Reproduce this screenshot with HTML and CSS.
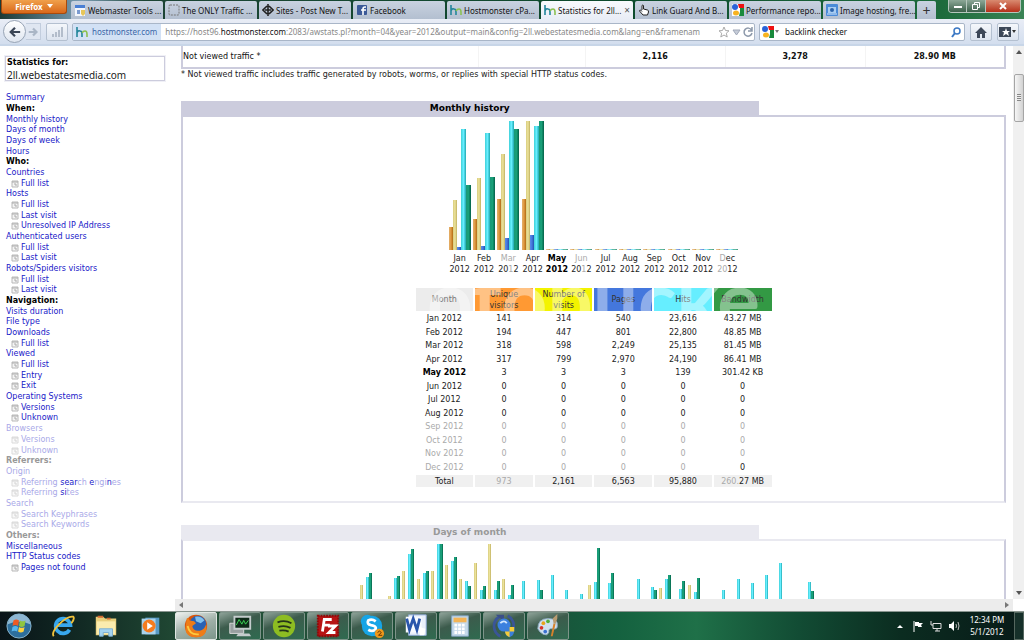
FILE: index.html
```html
<!DOCTYPE html>
<html lang="en">
<head>
    <meta charset="UTF-8">
    <meta name="viewport" content="width=device-width, initial-scale=1.0">
    <title>Statistics for 2ll.webestatesmedia.com</title>
    <link rel="stylesheet" href="styles.css">
</head>
<body>
    <svg width="0" height="0" class="defs">
        <symbol id="hm" viewBox="0 0 12 12"><path d="M1 1v10M1 7q1-3 3-2q2 0 2 3v3" fill="none" stroke="#23869b" stroke-width="1.6"/><path d="M6 7q1-2 3-2q2 0 2 3v3" fill="none" stroke="#8cc152" stroke-width="1.6"/></symbol>
        <symbol id="google" viewBox="0 0 12 12"><path d="M0 0h12v12H0z" fill="#fff"/><path d="M6 0h6v4H7z" fill="#e11"/><path d="M8 4h4v8H7l1-4z" fill="#198a3c"/><circle cx="3" cy="3" r="3" fill="#2a62d8"/><ellipse cx="4" cy="9" rx="3" ry="2.5" fill="#f8b320"/></symbol>
        <symbol id="page" viewBox="0 0 8 8"><path d="M1 1h6v6H1z" fill="#f4f4f4" stroke="#b8b8b8"/><path d="M1 2h6M3 4h2v2" fill="none" stroke="#aaa"/></symbol>
    </svg>

    <header class="titlebar">
        <button class="firefox">Firefox <svg viewBox="0 0 6 4"><path d="M0 0h6L3 4z" fill="#fff"/></svg></button>
        <nav class="tabs">
            <button class="tab"><svg viewBox="0 0 12 12"><path d="M1 3h10v9H1z" fill="#f4f7fc"/><path d="M1 1h10v3H1z" fill="#4a7fd4"/><path d="M3 6h3v4H3z" fill="#7a9ad0"/><path d="M7 6h4v4l-2 2-2-2z" fill="#e7c65a"/></svg><span>Webmaster Tools ...</span></button>
            <button class="tab"><svg viewBox="0 0 12 12"><rect x="1" y="1" width="10" height="10" rx="1" fill="none" stroke="#777" stroke-dasharray="2 1"/></svg><span>The ONLY Traffic ...</span></button>
            <button class="tab"><svg viewBox="0 0 12 12"><path d="M5 2L1 6l4 4M7 2l4 4-4 4M6 0v12M3 6h6" fill="none" stroke="#222" stroke-width="1.6"/></svg><span>Sites - Post New T...</span></button>
            <button class="tab"><svg viewBox="0 0 12 12"><rect x="1" y="1" width="10" height="10" rx="1" fill="#3b5998"/><path d="M10 3H9Q7 3 7 5v6M5 6h5" fill="none" stroke="#fff" stroke-width="1.6"/></svg><span>Facebook</span></button>
            <button class="tab"><svg><use href="#hm"/></svg><span>Hostmonster cPa...</span></button>
            <button class="tab active"><svg><use href="#hm"/></svg><span>Statistics for 2ll...</span><i class="close">×</i></button>
            <button class="tab"><svg viewBox="0 0 12 12"><path d="M4 6V1.500q1-1 1.500 0V5l4 1q1 0 1 2l-1 3H5L1.500 7q0-1 1-1L4 7.500" fill="#fff" stroke="#222"/></svg><span>Link Guard And B...</span></button>
            <button class="tab"><svg><use href="#google"/></svg><span>Performance repo...</span></button>
            <button class="tab"><svg viewBox="0 0 12 12"><rect width="12" height="12" rx="1" fill="#4b8bd8"/><path d="M2 3h8v6H2z" fill="#a9cdf2"/><circle cx="6" cy="6" r="2" fill="#2c64ad"/><path d="M1 10h10" stroke="#d6e8fb"/></svg><span>Image hosting, fre...</span></button>
            <button class="tab new">+</button>
        </nav>
        <div class="window-buttons">
            <button aria-label="Minimize"><svg viewBox="0 0 12 10"><path d="M2 5h8v2H2z" fill="#fff"/></svg></button>
            <button aria-label="Restore"><svg viewBox="0 0 12 10"><path d="M4.500 3V1.500h5v5H8M2.500 3.500h5v5h-5z" fill="none" stroke="#fff"/></svg></button>
            <button class="quit" aria-label="Close"><svg viewBox="0 0 12 10"><path d="M3 2l6 6M9 2L3 8" stroke="#fff" stroke-width="2"/></svg></button>
        </div>
    </header>

    <div class="toolbar">
        <button class="back" aria-label="Back"><svg viewBox="0 0 14 14"><path d="M7 2L2 7l5 5M2 7h11" fill="none" stroke="#3b4656" stroke-width="2.600"/></svg></button>
        <button class="forward" aria-label="Forward"><svg viewBox="0 0 14 14"><path d="M7 3l4 4-4 4M11 7H2" fill="none" stroke="#aab6c6" stroke-width="2.600"/></svg></button>
        <button class="square" aria-label="Rank"><svg viewBox="0 0 12 12"><path d="M1 8h2v3H1zM4 6h2v5H4zM7 4h2v7H7zM10 1h2v10h-2z" fill="#b3bdcb"/></svg></button>
        <div class="urlbar">
            <span class="identity"><svg><use href="#hm"/></svg>hostmonster.com</span>
            <span class="url">https://host96.<b>hostmonster.com</b>:2083/awstats.pl?month=04&amp;year=2012&amp;output=main&amp;config=2ll.webestatesmedia.com&amp;lang=en&amp;framenam</span>
            <svg viewBox="0 0 12 12"><path d="M6 1l1.500 3.500 3.500.3-2.700 2.400.9 3.800L6 9l-3.200 2 .9-3.800L1 4.800l3.500-.3z" fill="#fff" stroke="#aaa"/></svg>
            <svg viewBox="0 0 12 12"><path d="M3 4h7L6.500 9z" fill="#c6ccd8" stroke="#a0a8b8"/></svg>
            <svg viewBox="0 0 12 12"><path d="M9.500 4A4 4 0 1 0 10 7M10 1v4H6" fill="none" stroke="#8d99ab" stroke-width="1.500"/></svg>
        </div>
        <div class="search">
            <svg><use href="#google"/></svg>
            <svg class="caret" viewBox="0 0 6 4"><path d="M1 0h4L3 3z" fill="#777"/></svg>
            <input type="text" value="backlink checker" aria-label="Search">
            <svg viewBox="0 0 12 12"><circle cx="7" cy="5" r="3" fill="none" stroke="#3b78c4" stroke-width="1.500"/><path d="M5 7l-3 4" stroke="#3b78c4" stroke-width="2"/></svg>
        </div>
        <button class="square" aria-label="Home"><svg viewBox="0 0 12 12"><path d="M6 1l6 6h-2v5H7V8H5v4H2V7H0z" fill="#3d4858"/></svg></button>
        <button class="square" aria-label="Bookmarks"><svg viewBox="0 0 12 12"><path d="M0 1h12v10H0z" fill="#3d4858"/><path d="M7 2l1 3h3L9 6.500 10 10 7 8l-3 2 1-3.500L3 5h3z" fill="#fff"/></svg><svg class="caret" viewBox="0 0 6 4"><path d="M1 0h4L3 3z" fill="#333"/></svg></button>
    </div>

    <div class="content">
        <aside class="sidebar">
            <div class="site"><b>Statistics for:</b><span>2ll.webestatesmedia.com</span></div>
            <ul class="menu">
                <li><a href="#">Summary</a></li>
                <li><b>When:</b></li>
                <li><a href="#">Monthly history</a></li>
                <li><a href="#">Days of month</a></li>
                <li><a href="#">Days of week</a></li>
                <li><a href="#">Hours</a></li>
                <li><b>Who:</b></li>
                <li><a href="#">Countries</a></li>
                <li class="sub"><svg><use href="#page"/></svg><a href="#">Full list</a></li>
                <li><a href="#">Hosts</a></li>
                <li class="sub"><svg><use href="#page"/></svg><a href="#">Full list</a></li>
                <li class="sub"><svg><use href="#page"/></svg><a href="#">Last visit</a></li>
                <li class="sub"><svg><use href="#page"/></svg><a href="#">Unresolved IP Address</a></li>
                <li><a href="#">Authenticated users</a></li>
                <li class="sub"><svg><use href="#page"/></svg><a href="#">Full list</a></li>
                <li class="sub"><svg><use href="#page"/></svg><a href="#">Last visit</a></li>
                <li><a href="#">Robots/Spiders visitors</a></li>
                <li class="sub"><svg><use href="#page"/></svg><a href="#">Full list</a></li>
                <li class="sub"><svg><use href="#page"/></svg><a href="#">Last visit</a></li>
                <li><b>Navigation:</b></li>
                <li><a href="#">Visits duration</a></li>
                <li><a href="#">File type</a></li>
                <li><a href="#">Downloads</a></li>
                <li class="sub"><svg><use href="#page"/></svg><a href="#">Full list</a></li>
                <li><a href="#">Viewed</a></li>
                <li class="sub"><svg><use href="#page"/></svg><a href="#">Full list</a></li>
                <li class="sub"><svg><use href="#page"/></svg><a href="#">Entry</a></li>
                <li class="sub"><svg><use href="#page"/></svg><a href="#">Exit</a></li>
                <li><a href="#">Operating Systems</a></li>
                <li class="sub"><svg><use href="#page"/></svg><a href="#">Versions</a></li>
                <li class="sub"><svg><use href="#page"/></svg><a href="#">Unknown</a></li>
                <li class="faint"><a href="#">Browsers</a></li>
                <li class="sub faint"><svg><use href="#page"/></svg><a href="#">Versions</a></li>
                <li class="sub faint"><svg><use href="#page"/></svg><a href="#">Unknown</a></li>
                <li class="faint"><b>Referrers:</b></li>
                <li class="faint"><a href="#">Origin</a></li>
                <li class="sub faint"><svg><use href="#page"/></svg><a href="#">Referring <em>sear</em>ch <em>e</em>ngi<em>n</em>es</a></li>
                <li class="sub faint"><svg><use href="#page"/></svg><a href="#">Referring <em>si</em>tes</a></li>
                <li class="faint"><a href="#">Search</a></li>
                <li class="sub faint"><svg><use href="#page"/></svg><a href="#">Search Keyphrases</a></li>
                <li class="sub faint"><svg><use href="#page"/></svg><a href="#">Search Keywords</a></li>
                <li class="faint"><b>Others:</b></li>
                <li><a href="#">Miscellaneous</a></li>
                <li><a href="#">HTTP Status codes</a></li>
                <li class="sub"><svg><use href="#page"/></svg><a href="#">Pages not found</a></li>
            </ul>
        </aside>

        <div class="frame">
            <main class="stats">
                <table class="traffic">
                    <tr><td class="name">Not viewed traffic *</td><td></td><td>2,116</td><td>3,278</td><td>28.90 MB</td></tr>
                </table>
                <p class="note">* Not viewed traffic includes traffic generated by robots, worms, or replies with special HTTP status codes.</p>

                <section>
                    <h2>Monthly history</h2>
                    <div class="box history">
                        <div class="months" id="months"></div>
                        <div class="table-wrap">
                            <table class="monthly">
                                <thead>
                                    <tr><th>Month</th><th class="unique">Unique visitors</th><th class="visits">Number of visits</th><th class="pages">Pages</th><th class="hits">Hits</th><th class="bandwidth">Bandwidth</th></tr>
                                </thead>
                                <tbody id="rows"></tbody>
                                <tfoot>
                                    <tr><td>Total</td><td class="soft">973</td><td>2,161</td><td>6,563</td><td>95,880</td><td><i>260.</i>27 MB</td></tr>
                                </tfoot>
                            </table>
                        </div>
                    </div>
                </section>

                <section class="days-section">
                    <h2 class="pale">Days of month</h2>
                    <div class="box pale">
                        <div class="days" id="days"></div>
                    </div>
                </section>
            </main>
            <div class="vscroll"><svg viewBox="0 0 6 4"><path d="M0 4h6L3 0z" fill="#555"/></svg><span class="thumb"></span><svg class="down" viewBox="0 0 6 4"><path d="M0 0h6L3 4z" fill="#555"/></svg></div>
            <div class="hscroll"><svg viewBox="0 0 4 6"><path d="M4 0v6L0 3z" fill="#777"/></svg><svg viewBox="0 0 4 6"><path d="M0 0v6l4-3z" fill="#777"/></svg></div>
        </div>
    </div>

    <footer class="taskbar">
        <div class="pinned">
            <button aria-label="Start"><svg viewBox="0 0 28 28"><circle cx="14" cy="14" r="13" fill="#2d6e9c" stroke="#8fb9d0"/><path d="M2 12a12 11 0 0 1 24 0q-12-5-24 0z" fill="#8db7d2"/><path d="M8 8q3-2 6 0l-1 6q-3-2-6 0z" fill="#ef5a24"/><path d="M15 8q3 2 6 0l-1 6q-3 2-6 0z" fill="#8fc63e"/><path d="M7 15q3-2 6 0l-1 5q-3-2-6 0z" fill="#55b4ee"/><path d="M14 15q3 2 6 0l-1 5q-3 2-6 0z" fill="#fdd13c"/></svg></button>
            <button aria-label="Internet Explorer"><svg viewBox="0 0 28 28"><path d="M21 18a8 8 0 1 1 1-5H8" fill="none" stroke="#38a8ee" stroke-width="4"/><path d="M4 25Q1 21 10 12T25 4q2 2-2 7" fill="none" stroke="#f0c23b" stroke-width="2"/></svg></button>
            <button aria-label="Explorer"><svg viewBox="0 0 28 28"><path d="M3 4h8l2 2h12v18H3z" fill="#e8cf7c"/><path d="M5 4h6M15 6h4" stroke="#d36b33" stroke-width="2"/><path d="M4 9h20v14H4z" fill="#faecae"/><path d="M7 25v-8h14v8h-4v-4h-6v4z" fill="#a4d4f0" stroke="#79aed0"/></svg></button>
            <button aria-label="Media Player"><svg viewBox="0 0 28 28"><path d="M9 5h15v18H9z" fill="#579ac5"/><path d="M5 6h15v17H5z" fill="#a9d2ec"/><circle cx="13" cy="14" r="7" fill="#f57c20"/><path d="M11 10l6 4-6 4z" fill="#fff"/></svg></button>
        </div>
        <div class="running">
            <button class="current" aria-label="Firefox"><svg viewBox="0 0 28 28"><circle cx="14" cy="14" r="12" fill="#d9560c"/><circle cx="16" cy="12" r="9" fill="#2a62b4"/><path d="M13 4q7-1 10 4l-4 3-5-2z" fill="#7fc0ee"/><path d="M4 6q2-2 3 2l5 1 2 2-4 3q1 6 8 5 5-1 7-7 2 14-11 14T3 14z" fill="#ee7c18"/><path d="M5 14q2 10 12 9" fill="none" stroke="#fcc940" stroke-width="2"/></svg></button>
            <button aria-label="Monitor"><svg viewBox="0 0 28 28"><path d="M3 11h15v11H3z" fill="#98a0a0" stroke="#ddd"/><path d="M8 4h17v13H8z" fill="#0e2a18" stroke="#c4cccc" stroke-width="2"/><path d="M10 13l3-6 3 5 2-4 2 4 3-4" fill="none" stroke="#3cdd58"/><path d="M12 22h12l2 3H10z" fill="#c4cccc"/></svg></button>
            <button aria-label="Spotify"><svg viewBox="0 0 28 28"><circle cx="14" cy="14" r="12" fill="#8dbd22"/><path d="M7 10q8-3 15 1M8 15q7-2 13 1M9 19q6-1 10 1" fill="none" stroke="#25351a" stroke-width="2"/></svg></button>
            <button aria-label="FileZilla"><svg viewBox="0 0 28 28"><path d="M3 3h22v22H3z" fill="#b71313" stroke="#8c0c0c" stroke-width="2" stroke-dasharray="2 1"/><path d="M8 20L10 7h8M9 13h7M14 14h8l-7 7h7" fill="none" stroke="#fff" stroke-width="3"/></svg></button>
            <button aria-label="Skype"><svg viewBox="0 0 28 28"><circle cx="9" cy="9" r="7" fill="#17a5e6"/><circle cx="18" cy="18" r="7" fill="#17a5e6"/><circle cx="14" cy="14" r="11" fill="#17a5e6"/><path d="M18 9q-4-3-8-1-2 4 3 5 6 1 5 4-3 4-8 1" fill="none" stroke="#fff" stroke-width="3"/><circle cx="22" cy="22" r="5" fill="#f0981a"/><path d="M20 21q2-3 4 0l-3 3h4" fill="none" stroke="#5c3000"/></svg></button>
            <button aria-label="Word"><svg viewBox="0 0 28 28"><path d="M6 2h19v22H6z" fill="#e9f0fb" stroke="#8fabd8"/><path d="M3 4h17v17H3z" fill="#f8fbff"/><path d="M4 6l3 12 4-12 4 12 3-12" fill="none" stroke="#2a56ac" stroke-width="3"/><path d="M18 15l6 2-1 7h-5z" fill="#fff"/></svg></button>
            <button aria-label="Calculator"><svg viewBox="0 0 28 28"><path d="M5 3h18v22H5z" fill="#c5d9ea" stroke="#7fa2bf"/><path d="M7 5h14v5H7z" fill="#f3b456"/><path d="M8 13h12M8 17h12M8 21h12" stroke="#fff" stroke-width="3" stroke-dasharray="3 1"/></svg></button>
            <button aria-label="Updater"><svg viewBox="0 0 28 28"><path d="M10 25A12 12 0 0 1 9 4M18 3a12 12 0 0 1 6 14" fill="none" stroke="#3a5598" stroke-width="3"/><path d="M5 2h9v7z" fill="#3a4f88"/><circle cx="14" cy="13" r="7" fill="#3b80df"/><path d="M10 11q4-4 7 0" stroke="#cfe6ff" fill="none" stroke-width="2"/><path d="M15 15h10v5q-1 5-5 6-4-1-5-6z" fill="#3b7fd9"/><path d="M20 15h5v5h-10q1 5 5 6z" fill="#f6cc36"/></svg></button>
            <button aria-label="Paint"><svg viewBox="0 0 28 28"><path d="M3 17Q3 6 14 6t10 8q0 4-5 3t-4 4q-2 4-6 2t-6-6z" fill="#cfe0ee" stroke="#8eabc3"/><circle cx="7" cy="16" r="2" fill="#d8342b"/><circle cx="9" cy="11" r="2" fill="#e8a31b"/><circle cx="14" cy="9" r="2" fill="#4fae3a"/><circle cx="11" cy="20" r="2" fill="#3a70d0"/><path d="M17 25l3-14 2 1-3 13z" fill="#d7822b"/><path d="M20 11l-1-5 5-5v5l-2 6z" fill="#b79b72"/></svg></button>
        </div>
        <div class="tray">
            <svg viewBox="0 0 12 12"><path d="M3 8h6L6 5z" fill="#fff"/></svg>
            <svg viewBox="0 0 12 12"><path d="M2 1v11" stroke="#fff"/><path d="M3 2h4v1h4L9 5l1 2H6V6H3z" fill="#fff"/></svg>
            <svg viewBox="0 0 12 12"><path d="M3 3.500h8v5H3zM5 11h5M7 8v3M1 1v4h2" fill="none" stroke="#ddd"/></svg>
            <svg viewBox="0 0 12 12"><path d="M1 4h2l3-3v10L3 8H1z" fill="#fff"/><path d="M8 4q1 2 0 4M10 2q2 4 0 8" fill="none" stroke="#bbb"/></svg>
            <div class="clock"><span>12:34 PM</span><span>5/1/2012</span></div>
            <button class="desktop" aria-label="Show desktop"></button>
        </div>
    </footer>

    <script>
        // unique visitors, visits, pages, hits, bandwidth
        const months = [
            ['Jan', [23, 50, 3, 121, 65], ['141', '314', '540', '23,616', '43.27 MB']],
            ['Feb', [31, 72, 4, 117, 73], ['194', '447', '801', '22,800', '48.85 MB']],
            ['Mar', [51, 96, 12, 129, 121], ['318', '598', '2,249', '25,135', '81.45 MB']],
            ['Apr', [51, 129, 15, 124, 129], ['317', '799', '2,970', '24,190', '86.41 MB']],
            ['May', [1, 1, 1, 1, 1], ['3', '3', '3', '139', '301.42 KB']],
            ['Jun'], ['Jul'], ['Aug'], ['Sep'], ['Oct'], ['Nov'], ['Dec']
        ];
        const kinds = ['u', 'v', 'p', 'h', 'k'];
        const softLabels = {
            Mar: ['<i>Mar</i>', '20<i>1</i>2'],
            Jun: ['<i>Jun</i>', '20<i>1</i>2'],
            Dec: ['<i>D</i>ec', '<i>20</i>12']
        };

        function bar(kind, height) {
            return `<span class="bar ${kind}" style="height:${height}px"></span>`;
        }

        months.forEach(([name, heights = [1, 1, 1, 1, 1], values = ['0', '0', '0', '0', '0']], i) => {
            const label = softLabels[name] || [name, '2012'];
            const now = name === 'May' ? 'now' : '';
            document.getElementById('months').innerHTML +=
                `<div class="month ${now} ${i > 3 ? 'empty' : ''}"><div class="bars">${heights.map((h, n) => bar(kinds[n], h)).join('')}</div><span>${label[0]}</span><span>${label[1]}</span></div>`;
            document.getElementById('rows').innerHTML +=
                `<tr class="${now} ${i > 7 ? 'soft' : ''}"><td>${name} 2012</td>${values.map(v => `<td>${v}</td>`).join('')}</tr>`;
        });

        // visits, hits, bandwidth for each day, then the average
        const days = [
            [16, 24, 28], [0, 2, 0], [5, 23, 25], [30, 47, 52], [22, 28, 30], [30, 57, 57], [36, 40, 44], [22, 20, 15],
            [38, 11, 15], [57, 11, 20], [22, 6, 16], [0, 20, 2], [0, 21, 11], [0, 26, 0], [0, 11, 0], [0, 7, 0],
            [16, 19, 53], [2, 18, 28], [0, 0, 0], [0, 22, 0], [0, 14, 11], [13, 22, 26], [0, 12, 20], [16, 9, 23],
            [0, 1, 0], [2, 11, 0], [0, 22, 0], [0, 18, 0], [0, 26, 0], [0, 38, 0], [0, 0, 0], [1, 19, 10], [0, 0, 0]
        ];
        days.forEach(([v, h, k]) => {
            document.getElementById('days').innerHTML += `<div class="bars">${bar('v', v)}${bar('p', 0)}${bar('h', h)}${bar('k', k)}</div>`;
        });
    </script>
</body>
</html>
```
FILE: styles.css
```css
* {
    margin: 0;
    padding: 0;
    box-sizing: border-box;
}
body {
    display: flex;
    flex-direction: column;
    height: 100vh;
    overflow: hidden;
    background: #fff;
    font-family: "DejaVu Sans", sans-serif;
    font-size: 8px;
    color: #222;
}
button {
    border: none;
    background: none;
    font: inherit;
    color: inherit;
}
svg {
    width: 12px;
    height: 12px;
    flex: none;
}
.defs {
    position: absolute;
    width: 0;
    height: 0;
}

/* browser window */
.titlebar, .toolbar {
    font-family: "Noto Sans", sans-serif;
    font-size: 8px;
    display: flex;
}
.titlebar {
    height: 19px;
    background: linear-gradient(90deg, #1b3a35, #7b9db4 8%, #1d4434 14%, #0c4a2c 60%, #1d6b3c 92%, #3a8455);
}
.firefox {
    width: 66px;
    height: 14px;
    margin: 0 4px 0 1px;
    background: linear-gradient(#f0a04b, #d9681a);
    border: 1px solid #a84a0c;
    border-top: none;
    border-radius: 0 0 3px 3px;
    color: #fff;
    font-weight: bold;
    line-height: 12px;
}
.firefox svg {
    width: 6px;
    height: 4px;
    margin: 0 0 2px 2px;
}
.tabs {
    display: flex;
    flex: 1;
    gap: 2px;
    padding-top: 1px;
}
.tab {
    display: flex;
    align-items: center;
    gap: 2px;
    flex: 0 1 92px;
    min-width: 0;
    padding: 0 3px;
    background: linear-gradient(#c9d2e0, #b3bfd0);
    border-radius: 2px 2px 0 0;
    color: #111;
    white-space: nowrap;
}
.tab.active {
    background: linear-gradient(#f8fafd, #e9edf6);
}
.tab .close {
    font-style: normal;
    font-size: 10px;
    margin-left: auto;
    color: #555;
}
.tab.new {
    flex: 0 0 19px;
    justify-content: center;
    font-size: 14px;
    color: #333;
}
.window-buttons {
    display: flex;
    width: 73px;
    height: 13px;
    margin-right: 3px;
    border: 1px solid #b5c6bc;
    border-top: none;
    border-radius: 0 0 4px 4px;
    overflow: hidden;
}
.window-buttons button {
    flex: 1;
    background: linear-gradient(#8ca797, #3b604a);
    border-right: 1px solid #b5c6bc;
    line-height: 0;
}
.window-buttons .quit {
    flex: 2;
    border: none;
    background: linear-gradient(#d98a70, #b5301a);
}
.toolbar {
    align-items: center;
    height: 27px;
    padding: 0 5px 0 3px;
    background: linear-gradient(#e9edf6, #d3deee);
    border-bottom: 2px solid #c8d6e8;
}
.back {
    width: 23px;
    height: 23px;
    border: 1px solid #98a4b5;
    border-radius: 50%;
    background: linear-gradient(#fff, #dfe6f0);
    line-height: 0;
}
.forward {
    width: 15px;
    height: 17px;
    line-height: 0;
    background: #dfe6f1;
    border: 1px solid #c2cddd;
    border-left: none;
}
.square {
    display: flex;
    align-items: center;
    justify-content: center;
    width: 22px;
    height: 18px;
    margin-left: 5px;
    border: 1px solid #b4c0d0;
    border-radius: 2px;
    background: linear-gradient(#f4f7fb, #dce4ef);
}
.urlbar, .search {
    display: flex;
    align-items: center;
    height: 18px;
    margin-left: 4px;
    border: 1px solid #a9b6c8;
    border-radius: 2px;
    background: #fff;
}
.urlbar {
    flex: 1;
    min-width: 0;
}
.identity {
    display: flex;
    align-items: center;
    gap: 4px;
    height: 16px;
    padding: 0 4px 0 3px;
    background: #d2e1f5;
    color: #3a67a8;
}
.url {
    flex: 1;
    overflow: hidden;
    white-space: nowrap;
    padding-left: 4px;
    color: #888;
}
.url b {
    font-weight: normal;
    color: #111;
}
.search {
    width: 206px;
    padding: 0 2px;
}
.search input {
    flex: 1;
    min-width: 0;
    border: none;
    font: inherit;
    color: #111;
    padding-left: 5px;
}
.caret {
    width: 6px;
    height: 4px;
}

/* left frame */
.content {
    display: flex;
    flex: 1;
    min-height: 0;
}
.sidebar {
    display: flex;
    flex-direction: column;
    width: 175px;
    padding: 10px 10px 38px 5px;
}
.site {
    display: flex;
    flex-direction: column;
    height: 25px;
    margin-bottom: 12px;
    padding-left: 1px;
    border: 1px solid #ccccdd;
    outline: 1px solid #f0f0f6;
    line-height: 12px;
}
.site b {
    color: #000;
}
.site span {
    font-family: "Noto Sans", sans-serif;
    font-size: 10px;
}
.menu {
    display: flex;
    flex-direction: column;
    flex: 1;
    list-style: none;
    padding-left: 1px;
}
.menu li {
    display: flex;
    align-items: center;
    flex: 1;
    min-height: 0;
    white-space: pre;
    line-height: 10px;
}
.menu a {
    color: #2020c8;
    text-decoration: none;
}
.menu b {
    color: #000;
}
.menu .sub {
    padding-left: 5px;
    gap: 2px;
}
.menu svg {
    width: 8px;
    height: 8px;
}
.menu .faint a {
    color: #a9a9e8;
}
.menu .faint b {
    color: #999;
}
.menu .faint svg {
    opacity: 0.5;
}
.menu em {
    font-style: normal;
    color: #2020c8;
}

/* right frame */
.frame {
    display: grid;
    grid-template-columns: 1fr 11px;
    grid-template-rows: minmax(0, 1fr) 12px;
    flex: 1;
    min-width: 0;
}
.stats {
    display: flex;
    flex-direction: column;
    overflow: hidden;
    padding: 0 7px 0 6px;
}
.traffic {
    flex: none;
    width: 100%;
    height: 23px;
    table-layout: fixed;
    border: 2px solid #ccccdd;
    border-top: none;
    border-collapse: collapse;
    font-weight: bold;
    text-align: center;
}
.traffic td {
    width: 17%;
    border-left: 1px solid #f4f4f4;
    color: #111;
}
.traffic td.name {
    width: 36%;
    text-align: left;
    font-weight: normal;
    border-left: 2px solid #ccccdd;
}
.traffic td:nth-child(2) {
    width: 13%;
}
.note {
    line-height: 12px;
    margin-bottom: 20px;
}
h2 {
    width: 70%;
    height: 14px;
    background: #ccccdd;
    font-size: 9px;
    line-height: 15px;
    text-align: center;
    color: #000;
}
h2.pale {
    background: #e9e9f0;
    color: #999;
}
.box {
    border: 2px solid #ccccdd;
}
.box.pale {
    flex: 1;
    border-top-color: #e9e9f0;
    border-bottom: none;
    padding-top: 3px;
}
.history {
    display: flex;
    flex-direction: column;
    align-items: center;
    padding: 4px 0 12px;
    margin-bottom: 22px;
    border-bottom-color: #e9e9f0;
}
.stats section {
    flex: none;
}
.stats .days-section {
    display: flex;
    flex-direction: column;
    flex: 1;
}
.months {
    display: grid;
    grid-template-columns: repeat(12, 1fr);
    width: 292px;
    margin-bottom: 11px;
}
.month {
    display: flex;
    flex-direction: column;
    align-items: center;
    line-height: 11px;
}
.month .bars {
    height: 129px;
    margin-bottom: 3px;
}
.month.now span {
    font-weight: bold;
    color: #000;
}
.month.empty .bar {
    opacity: 0.7;
}
.month i, .monthly i {
    font-style: normal;
    color: #aaa;
}
.bars {
    display: flex;
    align-items: flex-end;
}
.bar {
    width: 4px;
}
.month .h, .month .k {
    width: 5px;
}
.u { background: linear-gradient(90deg, #e3b06c, #e09a40 50%, #b06a14); }
.v { background: linear-gradient(90deg, #d8cd80, #ece29a 50%, #c0b060); }
.p { background: linear-gradient(90deg, #5a8ce8, #4477dd 50%, #2450b0); }
.h { background: linear-gradient(90deg, #40d0d8, #66eeff 50%, #1fa8b0); }
.k { background: linear-gradient(90deg, #1a9878, #18a078 50%, #046048); }
.days {
    display: grid;
    grid-template-columns: repeat(33, 1fr);
    width: 474px;
    height: 57px;
    margin: 0 auto;
    padding-left: 3px;
}
.days .bar {
    width: 3px;
}

.table-wrap {
    position: relative;
}
.monthly {
    width: 360px;
    table-layout: fixed;
    border-spacing: 2px;
    text-align: center;
    line-height: 11px;
}
.monthly th {
    height: 23px;
    font-weight: normal;
    background: #ececec;
    color: #333;
}
.monthly th:first-child {
    color: #777;
}
.monthly .unique { background: #ff9933; }
.monthly .visits { background: #f3f300; }
.monthly .pages { background: #4477dd; }
.monthly .hits { background: #66eeff; }
.monthly .bandwidth { background: #339944; }
.monthly tbody tr {
    height: 11px;
}
.monthly tbody tr:nth-child(even) {
    height: 12px;
}
.monthly .now td:first-child {
    font-weight: bold;
    color: #000;
}
.monthly .soft, .monthly .soft td {
    color: #aaa;
}
.monthly tbody tr:last-child td:last-child {
    color: #222;
}
.monthly tfoot td {
    height: 12px;
    background: #f0f0f0;
}
/* pale lettering across the heading row */
.table-wrap::after {
    content: "otobucke";
    position: absolute;
    inset: 2px 2px auto 2px;
    height: 23px;
    overflow: hidden;
    font-family: Lato, sans-serif;
    font-size: 80px;
    font-weight: bold;
    line-height: 20px;
    text-align: center;
    color: rgba(255, 255, 255, 0.4);
    pointer-events: none;
}

/* scroll bars */
.vscroll {
    display: flex;
    flex-direction: column;
    align-items: center;
    background: #f0f0f0;
    padding: 4px 0;
}
.vscroll svg {
    width: 6px;
    height: 4px;
}
.vscroll .down {
    margin-top: auto;
}
.thumb {
    width: 10px;
    height: 48px;
    margin-top: 20px;
    border: 1px solid #a5a5a5;
    border-radius: 2px;
    background: linear-gradient(90deg, #f6f6f6, #d2d2d2);
}
.thumb::before {
    content: "";
    display: block;
    width: 4px;
    height: 7px;
    margin: 19px auto 0;
    background: repeating-linear-gradient(#888 0 1px, #eee 1px 2px);
}
.hscroll {
    display: flex;
    align-items: center;
    justify-content: space-between;
    background: #ececec;
    padding: 0 4px;
}
.hscroll svg {
    width: 4px;
    height: 6px;
}

/* taskbar */
.taskbar {
    display: flex;
    height: 29px;
    border-top: 1px solid #89958f;
    background: linear-gradient(90deg, #091418, #122a24 8%, #245138 20%, #1c4b38 50%, #14613f 60%, #1f7048 68%, #124c34 78%, #0b2c20 88%, #081a18);
}
.pinned, .running {
    display: flex;
}
.pinned {
    width: 175px;
}
.pinned button {
    width: 44px;
    padding-right: 6px;
}
.taskbar button {
    line-height: 0;
}
.taskbar button svg {
    width: 26px;
    height: 26px;
}
.running {
    gap: 2px;
    flex: 1;
}
.running button {
    width: 42px;
    border: 1px solid #7d9489;
    border-radius: 2px;
    background: linear-gradient(160deg, #8ea298, #3c5b4c 40%, #2f6b50);
}
.running .current {
    background: linear-gradient(160deg, #eef1ef, #9fb0a8 50%, #7d968b);
    border-color: #dfe6e2;
}
.tray {
    display: flex;
    align-items: center;
    gap: 6px;
    color: #fff;
    font-family: "Noto Sans", sans-serif;
    font-size: 8px;
}
.clock {
    display: flex;
    flex-direction: column;
    width: 42px;
    line-height: 12px;
    text-align: center;
}
.desktop {
    align-self: stretch;
    width: 10px;
    border: 1px solid #55675f;
    background: #16302a;
}
```
